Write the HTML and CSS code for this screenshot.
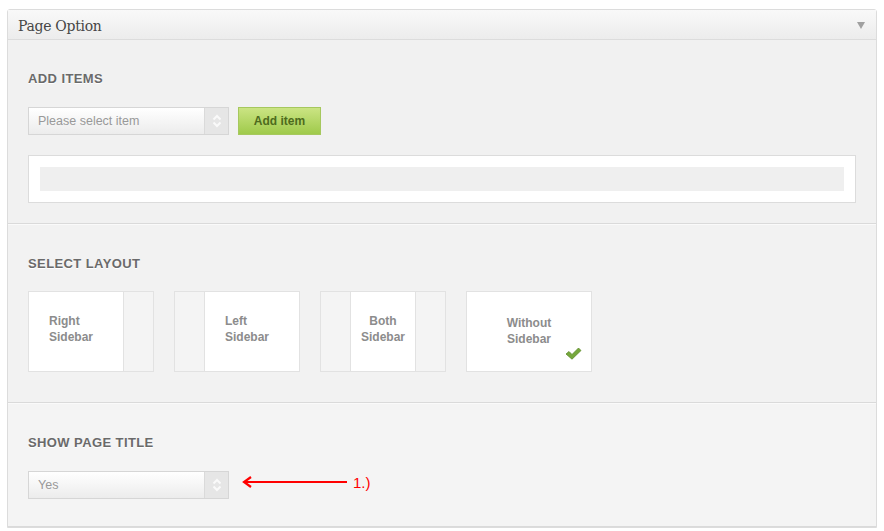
FILE: index.html
```html
<!DOCTYPE html>
<html>
<head>
<meta charset="utf-8">
<link rel="stylesheet" href="styles.css">
</head>
<body>
<div class="panel">
  <div class="panel-head">
    <span class="panel-title">Page Option</span>
    <svg class="toggle" width="8" height="7" viewBox="0 0 8 7"><path d="M0 0H8L4 7Z" fill="#a0a0a0"/></svg>
  </div>

  <div class="section s1">
    <div class="label">ADD ITEMS</div>
    <div class="row">
      <div class="select">
        <span class="select-text">Please select item</span>
        <span class="select-arrow">
          <svg width="10" height="14" viewBox="0 0 10 14"><path d="M1.5 5.5L5 2L8.5 5.5" fill="none" stroke="#fafafa" stroke-width="2"/><path d="M1.5 8.5L5 12L8.5 8.5" fill="none" stroke="#fafafa" stroke-width="2"/></svg>
        </span>
      </div>
      <button class="btn">Add item</button>
    </div>
    <div class="items-box"><div class="items-bar"></div></div>
  </div>

  <div class="section s2">
    <div class="label">SELECT LAYOUT</div>
    <div class="layouts">
      <div class="layout">
        <div class="lmain left">Right<br>Sidebar</div>
        <div class="lside"></div>
      </div>
      <div class="layout">
        <div class="lside first"></div>
        <div class="lmain left">Left<br>Sidebar</div>
      </div>
      <div class="layout">
        <div class="lside first"></div>
        <div class="lmain center">Both<br>Sidebar</div>
        <div class="lside"></div>
      </div>
      <div class="layout selected">
        <div class="lmain center full">Without<br>Sidebar</div>
        <svg class="check" width="17" height="13" viewBox="0 0 17 13"><path d="M1 7L4 4.5L7 7.5L13.5 1L16 3.5L7 12.2Z" fill="#76a83c" stroke="#5d8a2a" stroke-width="0.8"/></svg>
      </div>
    </div>
  </div>

  <div class="section s3">
    <div class="label">SHOW PAGE TITLE</div>
    <div class="row">
      <div class="select">
        <span class="select-text">Yes</span>
        <span class="select-arrow">
          <svg width="10" height="14" viewBox="0 0 10 14"><path d="M1.5 5.5L5 2L8.5 5.5" fill="none" stroke="#fafafa" stroke-width="2"/><path d="M1.5 8.5L5 12L8.5 8.5" fill="none" stroke="#fafafa" stroke-width="2"/></svg>
        </span>
      </div>
      <div class="note">
        <svg width="106" height="12" viewBox="0 0 106 12"><path d="M2 6H105" stroke="#f00" stroke-width="2"/><path d="M9 1L2 6L9 11" fill="none" stroke="#f00" stroke-width="2.2"/></svg>
        <span class="note-text">1.)</span>
      </div>
    </div>
  </div>
</div>
</body>
</html>
```
FILE: styles.css
```css
* { box-sizing: border-box; }
body {
  margin: 0;
  background: #fff;
  font-family: "Liberation Sans", Arial, sans-serif;
}
.panel {
  margin: 9px 0 0 7px;
  width: 870px;
  border: 1px solid #dcdcdc;
  border-radius: 3px 3px 0 0;
  background: #f1f1f1;
}
.panel-head {
  height: 30px;
  display: flex;
  align-items: center;
  justify-content: space-between;
  padding: 3px 11px 0 10px;
  background: linear-gradient(#f9f9f9, #ececec);
  border-bottom: 1px solid #dcdcdc;
}
.panel-title {
  font-family: "DejaVu Serif", Georgia, serif;
  font-size: 14px;
  color: #464646;
  letter-spacing: -0.3px;
}
.toggle { margin-top: -1px; }
.section {
  padding: 31px 20px 20px;
  border-top: 1px solid #fafafa;
  border-bottom: 1px solid #dadada;
}
.s1 { border-top: none; padding-bottom: 20px; }
.s2 { padding-bottom: 30px; background: #f2f2f2; }
.s3 { padding-bottom: 27px; background: #f4f4f4; }
.label {
  font-size: 13px;
  line-height: 16px;
  font-weight: bold;
  color: #6a6a6a;
  letter-spacing: 0.4px;
  text-shadow: 0 1px 0 #fff;
  margin-bottom: 20px;
}
.s2 .label { margin-bottom: 19px; }
.row {
  display: flex;
  align-items: center;
  gap: 9px;
}
.select {
  width: 201px;
  height: 28px;
  display: flex;
  border: 1px solid #d6d6d6;
  background: linear-gradient(#ffffff, #ececec);
}
.select-text {
  flex: 1;
  padding-left: 9px;
  font-size: 12.5px;
  line-height: 26px;
  color: #999;
}
.select-arrow {
  width: 24px;
  border-left: 1px solid #dadada;
  background: #e6e6e6;
  display: flex;
  align-items: center;
  justify-content: center;
}
.btn {
  width: 83px;
  height: 28px;
  border: 1px solid #a6c85e;
  background: linear-gradient(#cbe483, #9fca4b);
  font-family: "Liberation Sans", Arial, sans-serif;
  font-size: 12px;
  font-weight: bold;
  color: #4d6b1d;
  padding: 0;
}
.items-box {
  margin-top: 20px;
  background: #fff;
  border: 1px solid #dcdcdc;
  padding: 11px;
}
.items-bar {
  height: 24px;
  background: #efefef;
}
.layouts {
  display: flex;
  gap: 20px;
}
.layout {
  width: 126px;
  height: 81px;
  background: #fff;
  border: 1px solid #e2e2e2;
  display: flex;
  position: relative;
}
.lside {
  width: 30px;
  background: #f4f4f4;
  border-left: 1px solid #e2e2e2;
}
.lside.first {
  border-left: none;
  border-right: 1px solid #e2e2e2;
}
.lmain {
  flex: 1;
  font-size: 12px;
  line-height: 16px;
  font-weight: bold;
  color: #8c8c8c;
  padding-top: 21px;
}
.lmain.left { padding-left: 20px; }
.lmain.center { text-align: center; }
.lmain.full { padding-top: 23px; }
.check {
  position: absolute;
  left: 98px;
  top: 55px;
}
.note {
  display: flex;
  align-items: center;
  gap: 5px;
  margin-left: 4px;
  margin-top: -6px;
}
.note-text {
  font-size: 15px;
  color: #f00;
}
```
